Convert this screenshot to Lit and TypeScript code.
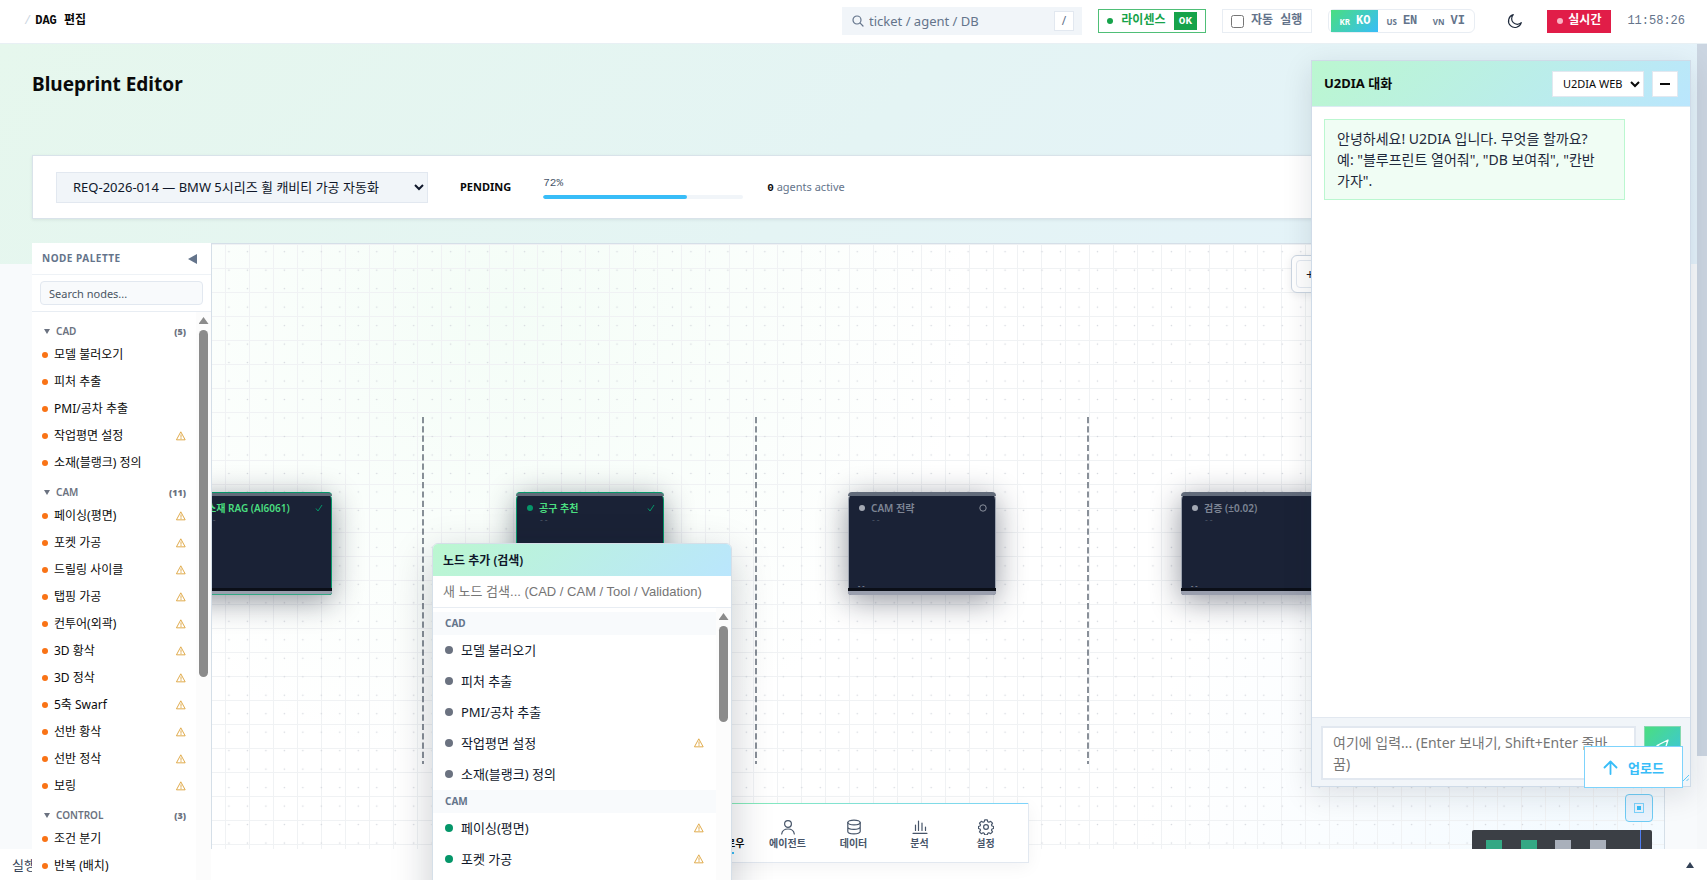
import { LitElement, html, svg, css, nothing } from "lit";
import { customElement, property } from "lit/decorators.js";
import { classMap } from "lit/directives/class-map.js";

type Entry = [label: string, warn: boolean];
interface Group { name: string; count: number; items: Entry[]; }

const GROUPS: Group[] = [
  {
    name: "CAD", count: 5, items: [
      ["모델 불러오기", false], ["피처 추출", false], ["PMI/공차 추출", false],
      ["작업평면 설정", true], ["소재(블랭크) 정의", false],
    ],
  },
  {
    name: "CAM", count: 11, items: [
      ["페이싱(평면)", true], ["포켓 가공", true], ["드릴링 사이클", true], ["탭핑 가공", true],
      ["컨투어(외곽)", true], ["3D 황삭", true], ["3D 정삭", true], ["5축 Swarf", true],
      ["선반 황삭", true], ["선반 정삭", true], ["보링", true],
    ],
  },
  { name: "CONTROL", count: 3, items: [["조건 분기", false], ["반복 (배치)", false]] },
];

const NODES = [
  { x: -28, title: "소재 RAG (Al6061)", done: true },
  { x: 304, title: "공구 추천", done: true },
  { x: 636, title: "CAM 전략", done: false },
  { x: 969, title: "검증 (±0.02)", done: false },
];

const SANS = css`"Noto Sans", "Noto Sans CJK KR", sans-serif`;
const MONO = css`"Liberation Mono", "Noto Sans CJK KR", monospace`;

const warnIcon = () => html`<svg class="warn" viewBox="0 0 12 12" width="10" height="10" fill="none" stroke="#dda33c" stroke-linejoin="round" stroke-linecap="round" aria-label="주의"><path d="M6 1.4 11 10.6H1Z" stroke-width="1.1"/><path d="M6 4.6v3M6 9v.1" stroke-width="1.1"/></svg>`;

const base = css`
  *, *::before, *::after { box-sizing: border-box; }
  button, input, select, textarea { font: inherit; color: inherit; margin: 0; border-radius: 0; }
  button { border: 0; background: none; padding: 0; cursor: pointer; }
  h1, h2, h3, p, ul { margin: 0; padding: 0; }
  ul { list-style: none; }
  svg { display: block; flex: none; }
  .track { width: 15px; flex: none; background: #fcfcfc; display: flex; flex-direction: column; align-items: center; }
  .thumb { width: 9px; border-radius: 5px; background: #8b8b8b; }
  .up { width: 10px; height: 7px; background: #8b8b8b; clip-path: polygon(50% 0, 100% 100%, 0 100%); }
`;

@customElement("top-bar")
export class TopBar extends LitElement {
  static styles = [base, css`
    :host { display: block; flex: none; position: relative; z-index: 5; }
    .bar { height: 44px; padding: 0 22px 1px 24px; display: flex; align-items: center; gap: 16px; background: #fff; border-bottom: 1px solid #e8f0f4; font: 12px/16px ${MONO}; color: #64748b; }
    .crumb { flex: 1; display: flex; gap: 4px; }
    .crumb i { color: #cbd5e1; font-style: normal; }
    .crumb b { color: #0a0a0a; }
    .search { display: flex; align-items: center; gap: 5px; width: 240px; height: 28px; padding: 0 8px 0 10px; background: #f1f5f9; font-family: ${SANS}; }
    .search input { flex: 1; min-width: 0; border: 0; padding: 0; background: none; outline: 0; font-size: 13px; }
    .search input::placeholder { color: #64748b; opacity: 1; }
    kbd { width: 20px; height: 20px; border: 1px solid #e2e8f0; background: #fff; font: 12px/18px ${SANS}; text-align: center; }
    .chip { height: 24px; display: flex; align-items: center; border: 1px solid #e8edf3; background: #fff; white-space: nowrap; }
    .license { width: 108px; border-color: #4fbf77; color: #16a34a; font-weight: 700; padding: 0 8px; justify-content: space-between; }
    .dot { width: 6px; height: 6px; border-radius: 50%; background: currentColor; }
    .ok { background: #16a34a; color: #fff; font-size: 11px; line-height: 18px; padding: 0 5px; }
    .auto { padding: 0 9px 0 8px; gap: 7px; font-weight: 700; }
    .auto input { width: 13px; height: 13px; }
    .langs { border-radius: 6px; padding: 0 2px; }
    .langs button { height: 22px; display: flex; align-items: center; gap: 6px; font-weight: 700; width: 47px; justify-content: center; }
    .langs small { font: 700 8px/12px ${SANS}; padding-top: 1px; }
    .langs .on { background: linear-gradient(135deg, #4ade80, #38bdf8); color: #fff; }
    .moon { width: 40px; height: 24px; padding-left: 8px; display: grid; place-items: center; color: #1e293b; }
    .live { height: 23px; background: #e11d48; color: #fff; font-weight: 700; display: flex; align-items: center; gap: 5px; width: 64px; justify-content: center; }
    .live .dot { background: #f9b4c3; }
  `];
  render() {
    return html`<header class="bar">
      <nav class="crumb" aria-label="경로"><i>/</i><b>DAG 편집</b></nav>
      <label class="search">
        <svg width="12" height="12" viewBox="0 0 12 12" fill="none" stroke="#64748b" stroke-width="1.2" stroke-linecap="round"><circle cx="5" cy="5" r="4"/><path d="m8.2 8.2 2.8 2.8"/></svg>
        <input type="text" aria-label="검색" placeholder="ticket / agent / DB" /><kbd>/</kbd>
      </label>
      <div class="chip license"><span class="dot"></span>라이센스<span class="ok">OK</span></div>
      <label class="chip auto"><input type="checkbox" />자동 실행</label>
      <div class="chip langs">
        <button class="on"><small>KR</small>KO</button>
        <button><small>US</small>EN</button>
        <button><small>VN</small>VI</button>
      </div>
      <button class="moon" aria-label="테마">
        <svg width="16" height="16" viewBox="0 0 16 16" fill="none" stroke="currentColor" stroke-width="1.2" stroke-linejoin="round"><path d="M14.300 9.700A6.500 6.500 0 1 1 6.300 1.700a5 5 0 0 0 8 8Z"/></svg>
      </button>
      <div class="live"><span class="dot"></span>실시간</div>
      <time>11:58:26</time>
    </header>`;
  }
}

@customElement("request-bar")
export class RequestBar extends LitElement {
  static styles = [base, css`
    :host { display: block; }
    .bar { height: 64px; display: flex; align-items: center; padding: 0 23px; gap: 32px; background: rgba(255, 255, 255, .97); border: 1px solid #d9e3ea; box-shadow: 0 1px 3px rgba(15, 23, 42, .08); font: 12px/16px ${SANS}; color: #64748b; }
    select { width: 372px; height: 31px; padding: 0 0 0 12px; background: #f1f5f9; border: 1px solid #e2e8f0; font: 13px ${SANS}; color: #0f172a; }
    .state { color: #0a0a0a; font-weight: 700; font-size: 11px; }
    .progress { width: 200px; display: grid; gap: 5px; font: 11px/14px ${MONO}; color: #475569; }
    .rail { height: 4px; border-radius: 2px; background: #f1f5f9; overflow: hidden; }
    .fill { height: 100%; border-radius: 2px; background: #38bdf8; }
    .agents { margin-left: -8px; font-size: 11px; }
    .agents b { font-family: ${MONO}; color: #0a0a0a; }
  `];
  @property({ type: Number }) percent = 72;
  render() {
    return html`<section class="bar">
      <select aria-label="요청"><option>REQ-2026-014 — BMW 5시리즈 휠 캐비티 가공 자동화</option></select>
      <span class="state">PENDING</span>
      <div class="progress"><span>${this.percent}%</span><div class="rail"><div class="fill" style="width:${this.percent}%"></div></div></div>
      <span class="agents"><b>0</b> agents active</span>
    </section>`;
  }
}

@customElement("node-palette")
export class NodePalette extends LitElement {
  static styles = [base, css`
    :host { display: flex; flex-direction: column; background: #fff; font: 12px/17px ${SANS}; color: #0a0a0a; overflow: hidden; }
    .head { height: 32px; flex: none; display: flex; align-items: center; justify-content: space-between; padding: 0 14px 0 10px; border-bottom: 1px solid #eef2f6; color: #64748b; }
    .head h2 { font-size: 10px; letter-spacing: .5px; }
    .find { display: block; padding: 6px 8px; height: 37px; border-bottom: 1px solid #e8edf3; flex: none; }
    .find input { display: block; width: 100%; height: 24px; border: 1px solid #e2e8f0; border-radius: 4px; background: #f8fafc; padding: 0 8px; font-size: 11px; }
    .find input::placeholder { color: #4b5563; opacity: 1; }
    .scroll { flex: 1; min-height: 0; display: flex; }
    .list { flex: 1; padding: 4px 10px 0; overflow: hidden; }
    .group { height: 21px; margin-top: 5px; width: 100%; display: flex; align-items: center; gap: 6px; padding-left: 2px; color: #6b7280; font-size: 10px; font-weight: 600; }
    .group b { margin-left: auto; font-size: 9px; }
    .item { height: 27px; padding-bottom: 2px; display: flex; align-items: center; gap: 6px; white-space: nowrap; }
    .item i { width: 6px; height: 6px; border-radius: 50%; background: #f97316; flex: none; }
    .warn { margin-left: auto; }
    .thumb { height: 347px; margin-top: 6px; }
    .up { margin-top: 5px; }
  `];
  render() {
    return html`
      <div class="head"><h2>NODE PALETTE</h2><button aria-label="접기"><svg width="9" height="10" viewBox="0 0 9 10" fill="#64748b"><path d="M9 0v10L0 5z"/></svg></button></div>
      <label class="find"><input type="text" aria-label="노드 검색" placeholder="Search nodes..." /></label>
      <div class="scroll">
        <div class="list">${GROUPS.map((g) => html`
          <button class="group"><svg width="6" height="5" viewBox="0 0 6 5" fill="#6b7280"><path d="M0 0h6L3 5z"/></svg>${g.name}<b>(${g.count})</b></button>
          <ul>${g.items.map(([t, w]) => html`<li class="item"><i></i>${t}${w ? warnIcon() : nothing}</li>`)}</ul>`)}
        </div>
        <div class="track"><span class="up"></span><span class="thumb"></span></div>
      </div>`;
  }
}

@customElement("flow-canvas")
export class FlowCanvas extends LitElement {
  static styles = [base, css`
    :host { display: block; position: relative; overflow: hidden; border: 1px solid #d5dfe8; background: radial-gradient(circle at 20% 10%, #f4fdf7, transparent 36%), radial-gradient(circle at 95% 95%, #f3faff, transparent 30%), #fff; font-family: ${SANS}; }
    .wires { position: absolute; inset: 0; width: 100%; height: 100%; }
    .node { position: absolute; top: 248px; width: 148px; height: 103px; border-radius: 8px 8px 3px 3px; border: 1px solid #9ca3af; border-width: 0 1px; background: #1a2236; box-shadow: 0 6px 30px rgba(15, 23, 42, .45); color: #7d8594; font: 600 10px/14px ${SANS}; padding: 9px 8px 0 10px; display: grid; grid-template-columns: 6px 1fr auto; grid-template-rows: 14px 10px 1fr 18px; column-gap: 6px; align-items: center; }
    .node::before { content: ""; position: absolute; inset: 0 -1px auto; height: 4px; border-radius: 4px 4px 0 0; background: #626b7a; }
    .node::after { content: ""; position: absolute; inset: auto -1px 0; height: 7px; background: linear-gradient(#0b0f18 3px, #9a9fae 3px); border-radius: 0 0 3px 3px; }
    .node i { width: 6px; height: 6px; border-radius: 50%; background: #a3a8b3; }
    .node span { white-space: nowrap; }
    .node .dash { grid-column: 2; color: #5c6473; font: 8px/10px ${MONO}; }
    .node .foot { grid-column: 1 / 3; grid-row: 4; color: #a3a8b3; font: 7px/10px ${MONO}; margin-left: -2px; }
    .node.done { border-color: #059669; color: #4ade80; }
    .done::before { border-top: 1px solid #059669; }
    .done::after { border-bottom: 1px solid #34a884; }
    .node.done i { background: #059669; }
    .tools { position: absolute; top: 11px; left: 1079px; width: 200px; height: 38px; border: 1px solid #cbd5e1; border-radius: 6px; padding: 4px; background: #fff; box-shadow: 0 2px 8px rgba(15, 23, 42, .08); }
    .tools button { width: 28px; height: 28px; border: 1px solid #e2e8f0; border-radius: 4px; font-size: 14px; color: #0f172a; }
    .toggle { position: absolute; right: 11px; top: 550px; width: 28px; height: 28px; border: 1px solid #6fccf5; border-radius: 4px; background: #e9f3fd; display: grid; place-items: center; }
    .map { position: absolute; right: 12px; top: 586px; width: 180px; height: 120px; background: #3b3f45; border-radius: 2px; }
  `];
  render() {
    return html`
      <svg class="wires" aria-hidden="true">
        <defs>
          <pattern id="lines" x="13" width="24" height="24" patternUnits="userSpaceOnUse"><path d="M.5 0V24M0 .5H24" stroke="#f0f2f4" fill="none"/></pattern>
          <pattern id="dots" x="10" y="-2" width="24" height="24" patternUnits="userSpaceOnUse" patternTransform="scale(.77)"><circle cx="12" cy="12" r="1" fill="#d3d7dd"/></pattern>
        </defs>
        <rect width="100%" height="100%" fill="url(#lines)"/>
        <rect width="100%" height="100%" fill="url(#dots)"/>
        ${[211, 544, 876].map((x) => svg`<line x1=${x} x2=${x} y1="173" y2="520" stroke="#4b5563" stroke-width="1.300" stroke-dasharray="6.200 3.100"/>`)}
      </svg>
      ${NODES.map((n) => html`<article class=${classMap({ node: true, done: n.done })} style="left:${n.x}px">
        <i></i><span>${n.title}</span>
        ${n.done
          ? html`<svg width="8" height="8" viewBox="0 0 8 8" fill="none" stroke="#059669"><path d="m1 4.500 2 2.500L7 1"/></svg>`
          : html`<svg width="8" height="8" viewBox="0 0 8 8" fill="none" stroke="#8b919d"><circle cx="4" cy="4" r="3.200"/></svg>`}
        <span class="dash">--</span><span class="foot">--</span>
      </article>`)}
      <div class="tools"><button aria-label="노드 추가">+</button></div>
      <button class="toggle" aria-label="미니맵"><svg width="10" height="10" viewBox="0 0 10 10"><rect x=".5" y=".5" width="9" height="9" fill="none" stroke="#7dd3fc"/><rect x="3" y="3" width="4" height="4" fill="#38bdf8"/></svg></button>
      <svg class="map" viewBox="0 0 180 120" aria-hidden="true">
        <g fill="#34a884"><rect x="14" y="10" width="16" height="11"/><rect x="49" y="10" width="16" height="11"/></g>
        <g fill="#a9b0bb"><rect x="83" y="10" width="16" height="11"/><rect x="118" y="10" width="16" height="11"/></g>
        <rect x="168" width="1" height="120" fill="#4f7df0"/>
      </svg>`;
  }
}

@customElement("node-menu")
export class NodeMenu extends LitElement {
  static styles = [base, css`
    :host { display: flex; flex-direction: column; border: 1px solid #d5dfe8; border-radius: 6px 6px 0 0; overflow: hidden; background: #fff; box-shadow: 0 12px 40px rgba(15, 23, 42, .22); font: 13px/18px ${SANS}; color: #0f172a; }
    h2 { height: 32px; flex: none; padding: 0 10px; font-size: 12px; font-weight: 600; line-height: 34px; background: linear-gradient(135deg, #bbf7d0, #bae6fd); }
    .find { height: 32px; flex: none; border: 0; border-bottom: 1px solid #e8edf3; padding: 0 10px; font: 13px "Liberation Sans", "Noto Sans CJK KR", sans-serif; outline: 0; }
    .find::placeholder { color: #757575; opacity: 1; }
    .scroll { flex: 1; min-height: 0; display: flex; }
    .list { flex: 1; padding-top: 4px; overflow: hidden; }
    h3 { height: 23px; padding: 0 12px; background: #f8fafc; color: #64748b; font-size: 10px; line-height: 23px; }
    .item { height: 31px; padding: 0 12px 2px; display: flex; align-items: center; gap: 8px; }
    .item i { width: 8px; height: 8px; border-radius: 50%; background: #6b7280; }
    .CAM i { background: #059669; }
    .warn { margin-left: auto; }
    .up { margin-top: 5px; }
    .thumb { height: 96px; margin-top: 6px; }
  `];
  render() {
    return html`<h2>노드 추가 (검색)</h2>
      <input class="find" type="text" aria-label="새 노드 검색" placeholder="새 노드 검색... (CAD / CAM / Tool / Validation)" />
      <div class="scroll">
        <div class="list">${GROUPS.slice(0, 2).map((g) => html`<h3>${g.name}</h3>
          <ul class=${g.name}>${g.items.map(([t, w]) => html`<li class="item"><i></i>${t}${w ? warnIcon() : nothing}</li>`)}</ul>`)}
        </div>
        <div class="track"><span class="up"></span><span class="thumb"></span></div>
      </div>`;
  }
}

@customElement("chat-panel")
export class ChatPanel extends LitElement {
  static styles = [base, css`
    :host { display: flex; flex-direction: column; border: 1px solid #cfdbe8; background: #fff; box-shadow: 0 8px 28px rgba(15, 23, 42, .12); font: 14px/21px ${SANS}; color: #1e293b; }
    .head { height: 46px; flex: none; display: flex; align-items: center; gap: 8px; padding: 0 12px; background: linear-gradient(135deg, #bbf7d0, #bae6fd); border-bottom: 1px solid #dcebf3; }
    h2 { flex: 1; font-size: 13px; color: #0a0a0a; }
    select { width: 92px; height: 26px; border: 1px solid #e2e8f0; background: #fff; font-size: 11px; padding-left: 6px; color: #0a0a0a; }
    .min { width: 26px; height: 26px; border: 1px solid #e2e8f0; background: #fff; display: grid; place-items: center; }
    .log { flex: 1; padding: 12px; }
    .msg { width: 85%; padding: 8px 12px; border: 1px solid #bbf7d0; background: #f0fdf4; word-break: keep-all; }
    .foot { flex: none; height: 69px; display: flex; gap: 8px; padding: 8px 9px 0; background: #f1f5f9; border-top: 1px solid #e2e8f0; align-items: flex-start; position: relative; }
    textarea { flex: 1; height: 54px; border: 2px solid #e2e8f0; background: #fff; padding: 4px 10px; resize: none; overflow: hidden; word-break: break-all; outline: 0; }
    textarea::placeholder { color: #757575; opacity: 1; }
    .send { width: 37px; height: 54px; background: linear-gradient(135deg, #4ade80, #38bdf8); border: 1px solid #86d9b0; display: grid; place-items: start center; padding-top: 12px; }
    .grip { position: absolute; right: 1px; bottom: 5px; }
  `];
  render() {
    return html`
      <div class="head"><h2>U2DIA 대화</h2>
        <select aria-label="대화 대상"><option>U2DIA WEB</option></select>
        <button class="min" aria-label="최소화"><svg width="10" height="2"><rect width="10" height="2" fill="#0a0a0a"/></svg></button>
      </div>
      <div class="log"><p class="msg">안녕하세요! U2DIA 입니다. 무엇을 할까요?<br />예: "블루프린트 열어줘", "DB 보여줘", "칸반<br />가자".</p></div>
      <div class="foot">
        <textarea aria-label="메시지" placeholder="여기에 입력... (Enter 보내기, Shift+Enter 줄바꿈)"></textarea>
        <button class="send" aria-label="보내기"><svg width="13" height="13" viewBox="0 0 13 13" fill="none" stroke="#fff" stroke-width="1.300" stroke-linejoin="round"><path d="M12 1 1 6.500l4.500 1.500L8.500 12Z"/></svg></button>
        <svg class="grip" width="6" height="6" viewBox="0 0 6 6" stroke="#38bdf8" stroke-width=".8"><path d="M0 6 6 0M3.500 6 6 3.500"/></svg>
      </div>`;
  }
}

@customElement("dock-nav")
export class DockNav extends LitElement {
  static styles = [base, css`
    :host { display: block; }
    .dock { display: flex; height: 60px; padding: 0 9px; background: #fff; border: 1px solid #e2e8f0; border-top: 0; position: relative; box-shadow: 0 4px 16px rgba(15, 23, 42, .05); }
    .dock::before { content: ""; position: absolute; inset: 0 0 auto; height: 1px; background: linear-gradient(90deg, #86efac, #7dd3fc); }
    a { width: 66px; display: flex; flex-direction: column; align-items: center; gap: 3px; padding-top: 16px; font: 700 10px/14px ${MONO}; color: #475569; text-decoration: none; white-space: nowrap; }
    .on { color: #0a0a0a; position: relative; }
    .on::after { content: ""; position: absolute; bottom: 8px; width: 24px; height: 2px; background: #38bdf8; }
  `];
  render() {
    const icons: [string, unknown][] = [
      ["워크플로우", svg`<path d="M2 3h5v4H2zM9 10h5v4H9zM7 5h4.500v5"/>`],
      ["에이전트", svg`<circle cx="8" cy="5" r="3.400"/><path d="M1.700 15c.5-3.500 3-5 6.300-5s5.800 1.500 6.300 5"/>`],
      ["데이터", svg`<ellipse cx="8" cy="3.500" rx="6.200" ry="2.400"/><path d="M1.800 3.500v9c0 1.300 2.800 2.400 6.200 2.400s6.200-1.100 6.200-2.400v-9M1.800 8c0 1.300 2.800 2.400 6.200 2.400s6.200-1.100 6.200-2.400"/>`],
      ["분석", svg`<path d="M1 14.300h14M3.500 11.500V6M6.500 11.500V2M10 11.500V4M13.500 11.500V8"/>`],
      ["설정", svg`<circle cx="8" cy="8" r="2.400"/><path d="M6.700.8h2.600l.5 2 1.100.5 1.800-1 1.800 1.800-1 1.800.5 1.100 1.600.5v2l-1.600.5-.5 1.100 1 1.800-1.800 1.800-1.800-1-1.100.5-.5 1.600H6.700l-.5-1.600-1.100-.5-1.800 1-1.800-1.800 1-1.800-.5-1.100-1.600-.5v-2L2 7l.5-1.100-1-1.800 1.800-1.800 1.800 1 1.100-.5z"/>`],
    ];
    return html`<nav class="dock">${icons.map(([t, s], i) => html`<a href="#" class=${i === 0 ? "on" : ""}>
      <svg width="16" height="16" viewBox="0 0 16 16" fill="none" stroke="currentColor" stroke-width="1.200" stroke-linejoin="round" stroke-linecap="round">${s}</svg>${t}</a>`)}</nav>`;
  }
}

@customElement("app-root")
export class AppRoot extends LitElement {
  static styles = [base, css`
    :host { display: flex; flex-direction: column; height: 100vh; overflow: hidden; position: relative; background: #f8fafc; font-family: ${SANS}; color: #0a0a0a; }
    .body { flex: 1; min-height: 0; display: flex; }
    .page { flex: 1; min-width: 0; padding: 24px 32px 0; display: flex; flex-direction: column; background: linear-gradient(135deg, #e6f7ed, #e4f4f4 50%, #e4f2fb) 0 0 / 100% 220px no-repeat; }
    h1 { font-size: 19px; line-height: 32px; }
    request-bar { margin-top: 55px; }
    .work { flex: 1; min-height: 0; margin-top: 24px; display: flex; }
    node-palette { width: 179px; flex: none; position: relative; z-index: 2; }
    flow-canvas { flex: 1; min-width: 0; }
    .side { width: 10px; flex: none; background: #f6f8fa; }
    .side span { display: block; height: 712px; background: #cbd5e1; }
    .status { position: absolute; inset: auto 0 0; height: 31px; z-index: 1; padding: 0 13px 0 12px; display: flex; align-items: center; justify-content: space-between; background: #fff; font-size: 13px; color: #334155; }
    dock-nav { position: absolute; z-index: 2; left: 50%; bottom: 17px; transform: translateX(-50%); }
    node-menu { position: absolute; z-index: 3; left: 432px; top: 543px; width: 300px; height: 420px; }
    chat-panel { position: absolute; z-index: 4; right: 16px; top: 60px; width: 380px; height: 727px; }
    .upload { position: absolute; z-index: 5; right: 24px; bottom: 92px; width: 99px; height: 42px; border: 1px solid #7dd3fc; background: #fff; color: #38bdf8; font-size: 13px; font-weight: 600; display: flex; align-items: center; justify-content: center; gap: 10px; }
  `];
  render() {
    return html`
      <top-bar></top-bar>
      <div class="body">
        <main class="page">
          <h1>Blueprint Editor</h1>
          <request-bar percent="72"></request-bar>
          <div class="work"><node-palette></node-palette><flow-canvas></flow-canvas></div>
        </main>
        <div class="side"><span></span></div>
      </div>
      <footer class="status"><span>실행</span><button aria-label="펼치기"><svg width="8" height="6" viewBox="0 0 8 6" fill="#334155"><path d="M4 0l4 6H0z"/></svg></button></footer>
      <dock-nav></dock-nav>
      <node-menu></node-menu>
      <chat-panel></chat-panel>
      <button class="upload"><svg width="15" height="15" viewBox="0 0 15 15" fill="none" stroke="currentColor" stroke-width="1.800" stroke-linecap="round" stroke-linejoin="round"><path d="M7.500 14V1.500M1.500 7.500l6-6 6 6"/></svg>업로드</button>
    `;
  }
}
